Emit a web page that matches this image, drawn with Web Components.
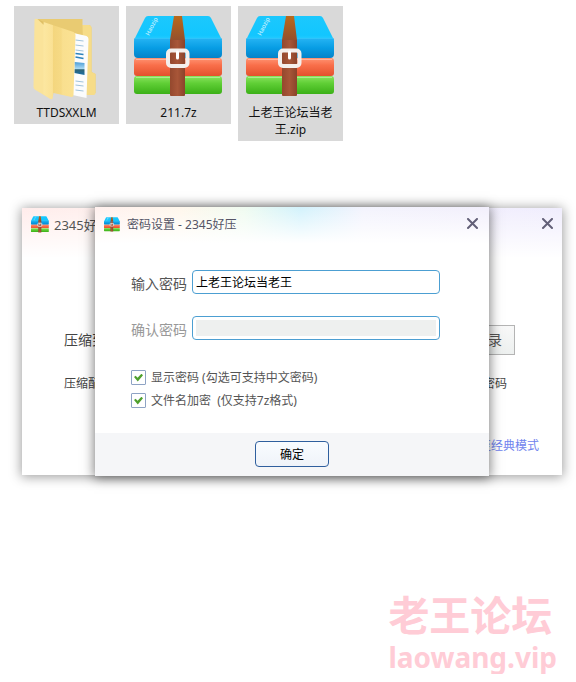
<!DOCTYPE html>
<html lang="zh-CN">
<head>
<meta charset="utf-8">
<meta name="viewport" content="width=device-width, initial-scale=1">
<title>2345好压</title>
<style>
  body {
    margin: 0;
    background: #fff;
    color: #444;
    font: 12px/18px "Noto Sans", "Noto Sans CJK SC", sans-serif;
  }
</style>
</head>
<body>
<desk-top>
  <file-tile slot="files" name="TTDSXXLM"><folder-icon></folder-icon></file-tile>
  <file-tile slot="files" name="211.7z"><archive-icon></archive-icon></file-tile>
  <file-tile slot="files" name="上老王论坛当老王.zip"><archive-icon></archive-icon></file-tile>

  <app-window slot="windows" class="main" heading="2345好压">
    <compress-form></compress-form>
  </app-window>
  <app-window slot="windows" class="dialog" heading="密码设置 - 2345好压">
    <text-field label="输入密码" value="上老王论坛当老王"></text-field>
    <text-field label="确认密码" disabled></text-field>
    <div class="options">
      <check-option label="显示密码 (勾选可支持中文密码)"></check-option>
      <check-option label="文件名加密&nbsp; (仅支持7z格式)"></check-option>
    </div>
    <push-button slot="footer">确定</push-button>
  </app-window>

  <site-mark slot="mark" name="老王论坛" address="laowang.vip"></site-mark>
</desk-top>

<script>
// base class: puts the template in the shadow root
class BaseElement extends HTMLElement {
  constructor() {
    super();
    this.attachShadow({ mode: 'open' });
  }
  attr(name) {
    return this.getAttribute(name) || '';
  }
  connectedCallback() {
    const template = document.createElement('template');
    template.innerHTML = this.getTemplate();
    this.shadowRoot.replaceChildren(template.content.cloneNode(true));
  }
}

class DeskTop extends BaseElement {
  getTemplate() {
    return `
      <style>
        :host { display: flex; flex-direction: column; }
        .files {
          display: flex;
          flex-wrap: wrap;
          align-items: flex-start;
          gap: 7px;
          min-height: 135px;
          padding: 6px 14px 66px;
        }
        /* both windows share one cell, the dialog lies on top */
        .windows { display: grid; padding: 0 14px 0 22px; }
        ::slotted(app-window) { grid-area: 1 / 1; }
        ::slotted(.main) { margin: 1px 0; }
        ::slotted(.dialog) { margin: 0 73px; }
        .mark { display: flex; justify-content: flex-end; padding: 118px 19px 0; }
      </style>
      <div class="files"><slot name="files"></slot></div>
      <main class="windows"><slot name="windows"></slot></main>
      <div class="mark"><slot name="mark"></slot></div>
    `;
  }
}

class FileTile extends BaseElement {
  getTemplate() {
    return `
      <style>
        :host {
          display: flex;
          flex-direction: column;
          align-items: center;
          gap: 6px;
          box-sizing: border-box;
          width: 105px;
          padding: 10px 8px 3px;
          background: #d9d9d9;
        }
        ::slotted(*) { width: 89px; height: 82px; }
        span { color: #111; line-height: 17px; text-align: center; word-break: break-all; }
      </style>
      <slot></slot>
      <span>${this.attr('name')}</span>
    `;
  }
}

class ArchiveIcon extends BaseElement {
  getTemplate() {
    return `
      <style>
        :host { display: block; }
        svg { display: block; width: 100%; height: 100%; }
      </style>
      <svg viewBox="0 0 89 82" aria-hidden="true">
        <defs>
          <linearGradient id="top" x2="0" y2="1"><stop stop-color="#1cc8fd"/><stop offset=".8" stop-color="#12c6ff"/><stop offset="1" stop-color="#2accff"/></linearGradient>
          <linearGradient id="blue" x2="0" y2="1"><stop stop-color="#26b4f4"/><stop offset=".5" stop-color="#079de4"/><stop offset="1" stop-color="#0582c8"/></linearGradient>
          <linearGradient id="red" x2="0" y2="1"><stop stop-color="#ff9473"/><stop offset=".4" stop-color="#f96f4a"/><stop offset="1" stop-color="#e3512d"/></linearGradient>
          <linearGradient id="green" x2="0" y2="1"><stop stop-color="#8be45f"/><stop offset=".4" stop-color="#60cf36"/><stop offset="1" stop-color="#3bb017"/></linearGradient>
          <linearGradient id="strap"><stop stop-color="#94482e"/><stop offset=".5" stop-color="#a85638"/><stop offset="1" stop-color="#8a432b"/></linearGradient>
          <linearGradient id="strapTop" x2="0" y2="1"><stop stop-color="#b9691c"/><stop offset="1" stop-color="#94502c"/></linearGradient>
        </defs>
        <path fill="url(#top)" d="M14 0H74Q76 0 77 2L88 24H0L11 2Q12 0 14 0Z"/>
        <path fill="url(#blue)" d="M1 22H87Q88 22 88 25V38Q88 42 84 42H4Q0 42 0 38V25Q0 22 1 22Z"/>
        <path fill="#30c3fb" d="M1 22H87V23H1Z"/>
        <rect y="42" width="88" height="18" rx="3" fill="url(#red)"/>
        <rect y="60" width="88" height="18" rx="3" fill="url(#green)"/>
        <path fill="#fff" opacity=".35" d="M2 43H86V44H2ZM2 61H86V62H2Z"/>
        <path fill="url(#strapTop)" d="M40 0H48L51 24H36Z"/>
        <path fill="url(#strap)" d="M36 24H51V79Q51 80 50 80H37Q36 80 36 79Z"/>
        <rect x="34" y="34.500" width="19.500" height="15.500" rx="3" fill="none" stroke="#f4efec" stroke-width="4"/>
        <path fill="none" stroke="#fff" stroke-width="3" stroke-linecap="round" d="M43.500 36V42"/>
        <text transform="translate(15 20) rotate(-63)" fill="#e2f9ff" font-family="Noto Sans" font-size="6">Haozip</text>
      </svg>
    `;
  }
}

class FolderIcon extends BaseElement {
  getTemplate() {
    return `
      <style>
        :host { display: block; }
        svg { display: block; width: 100%; height: 100%; }
      </style>
      <svg viewBox="0 0 88 82" overflow="visible" aria-hidden="true">
        <defs>
          <linearGradient id="cover" x2="1"><stop stop-color="#fce7a1"/><stop offset=".28" stop-color="#fae194"/><stop offset=".3" stop-color="#f4d67e"/><stop offset=".55" stop-color="#f6da85"/><stop offset=".6" stop-color="#f9df8f"/><stop offset="1" stop-color="#fbe293"/></linearGradient>
          <linearGradient id="photo" x2="0" y2="1"><stop stop-color="#4a9cd6"/><stop offset=".5" stop-color="#a8d8f2"/><stop offset=".6" stop-color="#2f6475"/><stop offset="1" stop-color="#1b6fa5"/></linearGradient>
        </defs>
        <path fill="#e9cb72" d="M13 3H60V9H67Q69 10 69 12V56L73 58V77L66 79L50 76Z"/>
        <path fill="#f6dc88" d="M60 9H67Q69 10 69 12V56L73 58V77Q73 79 71 79H62Z"/>
        <path fill="#fbfcfd" d="M51 17L64 20Q66 21 66 23L64 82L50 79Z"/>
        <path fill="none" stroke="#9fc3dc" d="M53 24L61 25M53 29L61 30M53 34L61 35M53 65L61 66M53 69L61 70M53 74L61 75"/>
        <path stroke="#2c83bd" stroke-width="1.500" d="M53 41L61 42.500M53 37.500L61 38.500"/>
        <path fill="url(#photo)" d="M52 46L62 47V59L52 57Z"/>
        <path fill="#fae39a" d="M12 4Q12 2 15 3L22 9L30 77V82Q30 84 28 83L13 74Q11 73 11 71Z"/>
        <path fill="url(#cover)" d="M21 6L51 16Q53 17 53 19L51 79Q51 81 49 81L31 77L30 82L28 83L21 78Z"/>
        <path fill="#d9b85c" opacity=".6" d="M15 3L21 6V9Z"/>
      </svg>
    `;
  }
}

class AppWindow extends BaseElement {
  getTemplate() {
    return `
      <style>
        :host {
          display: flex;
          flex-direction: column;
          color: #444;
          background:
            linear-gradient(transparent, #fff 50px),
            linear-gradient(to right, #ffeceb, #fff5f1 30%, #f3f0fe 75%, #f0edfd);
          box-shadow: 0 1px 11px 1px rgba(0, 0, 0, .38);
        }
        :host(.dialog) {
          background:
            linear-gradient(transparent, #fff 36px),
            linear-gradient(to right, #fff0ee, #fff7ec 22%, #effbf0 38%, #d2f2fc 52%, #f3f3fd 68%, #f2effc);
          box-shadow: 0 1px 11px 1px rgba(0, 0, 0, .5);
        }
        header {
          display: flex;
          align-items: center;
          gap: 5px;
          height: 32px;
          padding: 0 8px 0 9px;
          color: #555;
        }
        :host(.dialog) header { gap: 7px; height: 34px; padding-right: 10px; }
        archive-icon { width: 18px; height: 17px; }
        :host(.dialog) archive-icon { width: 16px; height: 15px; }
        h2 { flex: 1; margin: 0; padding-top: 2px; font-size: 13px; font-weight: 400; }
        :host(.dialog) h2 { font-size: 12px; color: #556; }
        button { padding: 0; border: 0; background: none; }
        svg { display: block; }
        .body { display: flex; flex-direction: column; }
        :host(.dialog) .body { gap: 22px; padding: 29px 36px 23px; }
        ::slotted(.options) {
          display: flex;
          flex-direction: column;
          gap: 4px;
          margin-top: 6px;
        }
        footer { display: none; }
        :host(.dialog) footer {
          display: flex;
          justify-content: center;
          padding: 8px 0 9px;
          background: #f5f6f8;
        }
      </style>
      <header>
        <archive-icon></archive-icon>
        <h2>${this.attr('heading')}</h2>
        <button type="button" aria-label="关闭">
          <svg width="13" height="13" viewBox="0 0 13 13"><path d="M2 1L11 10M11 1L2 10" stroke="#636078" stroke-width="2" stroke-linecap="round"/></svg>
        </button>
      </header>
      <div class="body"><slot></slot></div>
      <footer><slot name="footer"></slot></footer>
    `;
  }
}

class CompressForm extends BaseElement {
  getTemplate() {
    return `
      <style>
        :host {
          display: flex;
          flex-direction: column;
          padding: 85px 23px 20px 42px;
        }
        div { display: flex; align-items: center; justify-content: space-between; }
        .target { padding-right: 24px; font-size: 14px; }
        .config { margin-top: 20px; padding-right: 32px; }
        .mode { margin-top: 44px; justify-content: flex-end; }
        button {
          height: 30px;
          padding: 0 12px;
          border: 1px solid #b4b4b4;
          background: linear-gradient(#f8f8f8, #edf0ef);
          color: #555;
          font: inherit;
        }
        a { color: #6f83ee; text-decoration: none; }
      </style>
      <div class="target"><span>压缩到</span><button type="button">目录</button></div>
      <div class="config"><span>压缩配置</span><span>密码</span></div>
      <div class="mode"><a href="#">切换至经典模式</a></div>
    `;
  }
}

class TextField extends BaseElement {
  getTemplate() {
    const disabled = this.hasAttribute('disabled') ? 'disabled' : '';
    return `
      <style>
        :host { display: flex; align-items: center; gap: 5px; }
        label { flex: none; padding-top: 3px; font-size: 14px; color: #555; }
        input {
          flex: 1;
          min-width: 0;
          max-width: 248px;
          height: 24px;
          box-sizing: border-box;
          padding: 3px;
          border: 1px solid #4c9fd2;
          border-radius: 4px;
          background: #fff;
          color: #000;
          font: inherit;
        }
        input:disabled { background: #eef0ef content-box; }
        :host([disabled]) label { color: #999; }
      </style>
      <label for="field">${this.attr('label')}</label>
      <input id="field" type="text" value="${this.attr('value')}" ${disabled}>
    `;
  }
}

class CheckOption extends BaseElement {
  getTemplate() {
    return `
      <style>
        :host { display: block; }
        label { display: flex; align-items: center; gap: 5px; height: 19px; color: #555; }
        input {
          appearance: none;
          display: grid;
          place-items: center;
          box-sizing: border-box;
          width: 15px;
          height: 15px;
          margin: 0;
          border: 1px solid #8ea3c4;
          border-radius: 1px;
          background: #fff;
        }
        input:checked::before {
          content: "";
          width: 9px;
          height: 8px;
          background: #4fa02d;
          clip-path: polygon(0 44%, 18% 28%, 40% 52%, 82% 2%, 100% 22%, 42% 100%);
        }
      </style>
      <label><input type="checkbox" checked>${this.attr('label')}</label>
    `;
  }
}

class PushButton extends BaseElement {
  getTemplate() {
    return `
      <style>
        :host { display: block; }
        button {
          display: block;
          width: 74px;
          height: 26px;
          padding: 1px 0 0;
          border: 1px solid #2f5f9e;
          border-radius: 4px;
          background: linear-gradient(#f9fcff, #eff3f9);
          color: #000;
          font: inherit;
        }
      </style>
      <button type="button"><slot></slot></button>
    `;
  }
}

class SiteMark extends BaseElement {
  getTemplate() {
    return `
      <style>
        :host { display: block; color: #ffccd6; font-weight: 700; }
        span { display: block; }
        .name {
          font-family: "Liberation Sans", "Noto Sans CJK SC", sans-serif;
          font-size: 41px;
          line-height: 46px;
        }
        .address { font-size: 28px; line-height: 34px; }
      </style>
      <span class="name">${this.attr('name')}</span>
      <span class="address">${this.attr('address')}</span>
    `;
  }
}

customElements.define('archive-icon', ArchiveIcon);
customElements.define('folder-icon', FolderIcon);
customElements.define('file-tile', FileTile);
customElements.define('app-window', AppWindow);
customElements.define('compress-form', CompressForm);
customElements.define('text-field', TextField);
customElements.define('check-option', CheckOption);
customElements.define('push-button', PushButton);
customElements.define('site-mark', SiteMark);
customElements.define('desk-top', DeskTop);
</script>
</body>
</html>
